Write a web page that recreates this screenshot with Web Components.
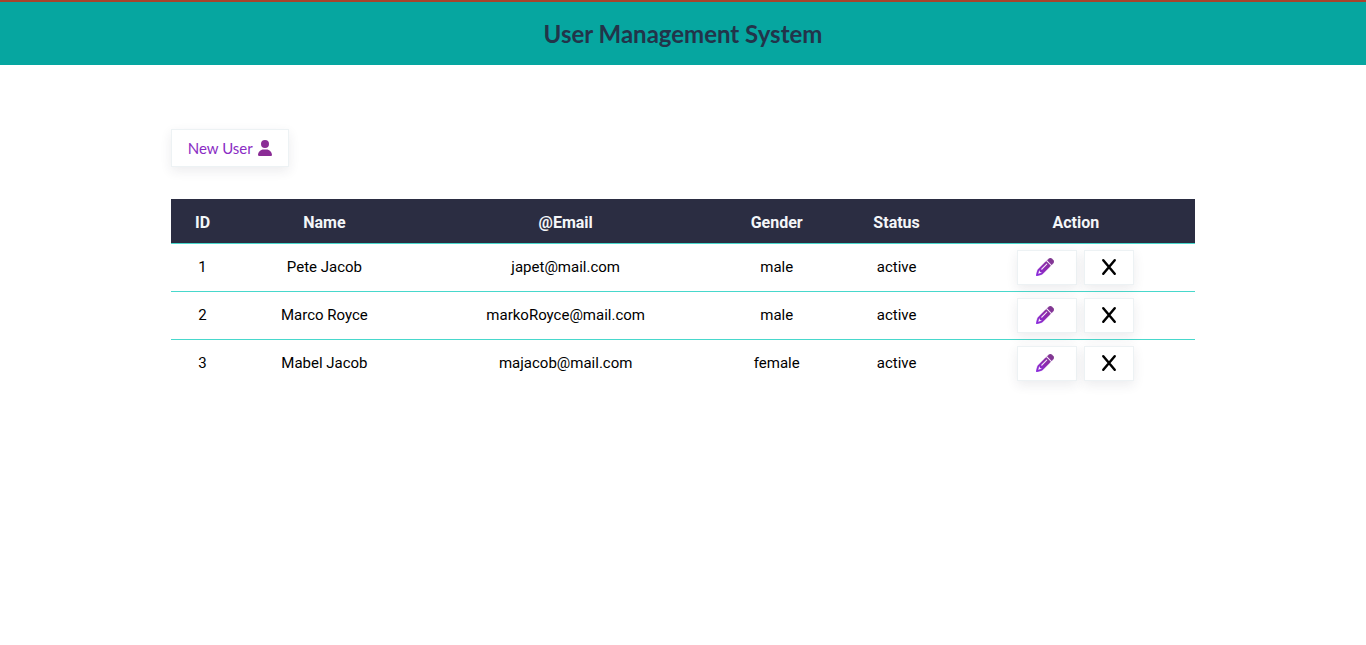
<!DOCTYPE html>
<html lang="en">
<head>
<meta charset="utf-8">
<meta name="viewport" content="width=device-width, initial-scale=1">
<title>User Management System</title>
<style>
  html, body { margin: 0; }
  body { background: #fff; color: #000; font-family: Lato, "Open Sans", sans-serif; font-size: 16px; }
</style>
</head>
<body>
<user-app></user-app>

<script>
const ICONS = {
  user: `<svg width="14" height="16" viewBox="0 0 448 512" fill="#8a2c95"><path d="M224 256A128 128 0 1 0 224 0a128 128 0 1 0 0 256zm-45.700 48C79.800 304 0 383.800 0 482.300C0 498.700 13.300 512 29.700 512H418.300c16.400 0 29.700-13.300 29.700-29.700C448 383.800 368.200 304 269.700 304H178.300z"/></svg>`,
  pencil: `<svg width="18" height="18" viewBox="0 0 512 512"><defs><linearGradient id="ink" x1="0" y1="1" x2="1" y2="0"><stop offset="0" stop-color="#8a2be2"/><stop offset=".5" stop-color="#8d29ae"/><stop offset="1" stop-color="#7d3c88"/></linearGradient></defs><path fill="url(#ink)" stroke="url(#ink)" stroke-width="8" d="M410.300 231l11.300-11.300-33.900-33.900-62.100-62.100L291.700 89.800l-11.300 11.300-22.600 22.600L58.600 322.900c-10.400 10.400-18 23.300-22.200 37.400L1 480.700c-2.500 8.400-.2 17.500 6.100 23.700s15.300 8.500 23.700 6.100l120.300-35.400c14.100-4.200 27-11.800 37.400-22.200L387.700 253.700 410.300 231zM160 399.400l-9.100 22.700c-4 3.100-8.500 5.400-13.300 6.900L59.400 452l23-78.100c1.400-4.900 3.800-9.400 6.900-13.300l22.700-9.100v32c0 8.800 7.200 16 16 16h32zM362.700 18.700L348.300 33.200 325.700 55.800 314.300 67.100l33.900 33.900 62.100 62.100 33.900 33.900 11.300-11.300 22.600-22.600 14.500-14.500c25-25 25-65.500 0-90.500L453.300 18.700c-25-25-65.500-25-90.500 0zm-47.400 168l-144 144c-6.200 6.200-16.400 6.200-22.600 0s-6.200-16.400 0-22.600l144-144c6.200-6.200 16.400-6.200 22.600 0s6.200 16.400 0 22.600z"/></svg>`,
  cross: `<svg width="16" height="18" viewBox="0 0 16 18" fill="none" stroke="#000" stroke-width="2.500" stroke-linecap="round"><path d="M2.300 2.300 13.700 15.700M13.700 2.300 2.300 15.700"/></svg>`
};

const USERS = [
  { id: 1, name: "Pete Jacob", email: "japet@mail.com", gender: "male", status: "active" },
  { id: 2, name: "Marco Royce", email: "markoRoyce@mail.com", gender: "male", status: "active" },
  { id: 3, name: "Mabel Jacob", email: "majacob@mail.com", gender: "female", status: "active" }
];

class ShadowElement extends HTMLElement {
  connectedCallback() {
    if (!this.shadowRoot) this.attachShadow({ mode: "open" }).innerHTML = this.render();
  }
}

class AppHeader extends ShadowElement {
  render() {
    return `<style>
      :host { display: block; }
      header { background: #06a6a0; border-top: 2px solid #a8432c; padding: 16px; text-align: center; }
      h1 { margin: 0; font-size: 24px; line-height: 31px; font-weight: 700; color: #22344a; }
    </style>
    <header><h1><slot></slot></h1></header>`;
  }
}

class AppIcon extends ShadowElement {
  render() {
    return `<style>
      :host { display: inline-flex; }
      svg { display: block; }
    </style>${ICONS[this.getAttribute("name")]}`;
  }
}

const CARD = `border: 1px solid #edf2f4; background: #fff; box-shadow: 0 4px 12px rgba(43, 45, 66, .09);`;

class NewUserLink extends ShadowElement {
  render() {
    return `<style>
      :host { display: inline-flex; }
      a { display: flex; align-items: center; gap: 5px; padding: 6px 16px; ${CARD}
          color: #8a2cc4; font-size: 15px; line-height: 24px; text-decoration: none; }
    </style>
    <a href="#new"><slot></slot><app-icon name="user"></app-icon></a>`;
  }
}

class ActionButton extends ShadowElement {
  render() {
    return `<style>
      :host { display: inline-flex; }
      button { display: flex; align-items: center; height: 35px; padding: 0 16px; margin: 0; ${CARD} border-radius: 0; cursor: pointer; }
      :host([icon="pencil"]) button { padding: 0 22px 0 18px; }
    </style>
    <button type="button" aria-label="${this.getAttribute("label")}"><app-icon name="${this.getAttribute("icon")}"></app-icon></button>`;
  }
}

class UserTable extends ShadowElement {
  render() {
    const rows = USERS.map(u => `<tr>
      <td>${u.id}</td><td>${u.name}</td><td>${u.email}</td><td>${u.gender}</td><td>${u.status}</td>
      <td><div class="actions">
        <action-button icon="pencil" label="Edit ${u.name}"></action-button>
        <action-button icon="cross" label="Delete ${u.name}"></action-button>
      </div></td></tr>`).join("");
    return `<style>
      :host { display: block; font-family: Roboto, sans-serif; }
      table { width: 100%; table-layout: fixed; border-collapse: collapse; text-align: center; }
      th, td { padding: 0 0 1px; font-size: 15px; line-height: 20px; }
      th { height: 40px; padding: 4px 0 0; background: #2b2d42; color: #f4f6f8; font-size: 16px; font-weight: 700; }
      td { height: 46px; }
      tr { border-bottom: 1px solid #48d8cc; }
      tbody tr:last-child { border-bottom: 0; }
      .id { width: 6.2%; } .name { width: 17.6%; } .email { width: 29.5%; }
      .gender { width: 11.7%; } .status { width: 11.7%; } .action { width: 23.3%; }
      .actions { display: flex; justify-content: center; gap: 7px; }
    </style>
    <table>
      <thead><tr>
        <th class="id" scope="col">ID</th><th class="name" scope="col">Name</th><th class="email" scope="col">@Email</th>
        <th class="gender" scope="col">Gender</th><th class="status" scope="col">Status</th><th class="action" scope="col">Action</th>
      </tr></thead>
      <tbody>${rows}</tbody>
    </table>`;
  }
}

class UserApp extends ShadowElement {
  render() {
    return `<style>
      :host { display: block; }
      main { width: 75%; margin: 64px auto; display: flex; flex-direction: column; align-items: flex-start; gap: 32px; }
      user-table { width: 100%; }
    </style>
    <app-header>User Management System</app-header>
    <main>
      <new-user-link>New User</new-user-link>
      <user-table></user-table>
    </main>`;
  }
}

customElements.define("app-header", AppHeader);
customElements.define("app-icon", AppIcon);
customElements.define("new-user-link", NewUserLink);
customElements.define("action-button", ActionButton);
customElements.define("user-table", UserTable);
customElements.define("user-app", UserApp);
</script>
</body>
</html>
